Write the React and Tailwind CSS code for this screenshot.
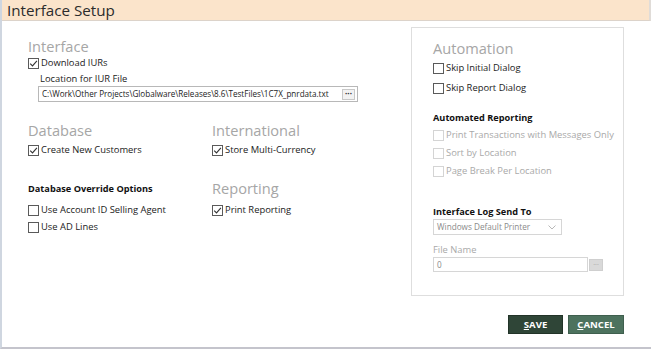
import React from "react";

const font = { fontFamily: '"Open Sans", "Noto Sans", sans-serif' };

function Box({ checked, disabled }) {
  return (
    <span
      className={
        "w-[11px] h-[11px] border flex items-center justify-center shrink-0 bg-white " +
        (disabled ? "border-[#d4d4d4]" : "border-[#5a5a5a]")
      }
    >
      {checked && (
        <svg width="9" height="9" viewBox="0 0 9 9">
          <path d="M1.2 4.6 L3.5 6.9 L7.9 1.8" fill="none" stroke="#333" strokeWidth="1.1" />
        </svg>
      )}
    </span>
  );
}

function Check({ label, checked, disabled, className = "" }) {
  return (
    <div className={"flex items-center gap-[2px] h-[14px] text-[9.4px] " + (disabled ? "text-[#a9a9a9] " : "text-[#222] ") + className}>
      <Box checked={checked} disabled={disabled} />
      <span className="leading-[14px] whitespace-nowrap">{label}</span>
    </div>
  );
}

function Heading({ children, className = "" }) {
  return <div className={"h-[20px] leading-[20px] text-[14.6px] text-[#a6a6a6] whitespace-nowrap " + className}>{children}</div>;
}

function Bold({ children, className = "" }) {
  return <div className={"h-[14px] leading-[14px] text-[9.2px] font-bold text-[#111] whitespace-nowrap " + className}>{children}</div>;
}

export default function App() {
  return (
    <div className="w-[651px] h-[349px] bg-white border-l-2 border-l-[#cfd6e0] border-b-2 border-b-[#c4c4cc] flex flex-col overflow-hidden" style={font}>
      <div className="h-[21px] shrink-0 bg-[#fbe4cb] border-b border-[#dcd3ca] border-r-2 border-r-[#e0dcd8] pl-[5px] flex items-center">
        <span className="text-[15.2px] leading-[19px] text-[#2b2b2b]">Interface Setup</span>
      </div>
      <div className="flex flex-1">
        <div className="w-[409px] pl-[26px]">
          <Heading className="mt-[15px]">Interface</Heading>
          <Check label="Download IURs" checked />
          <div className="mt-[2px] pl-[12px] h-[14px] leading-[14px] text-[9.4px] text-[#222]">Location for IUR File</div>
          <div className="ml-[10px] w-[320px] h-[16px] border border-[#b8b8b8] flex items-center pl-[3px] pr-[2px]">
            <span className="flex-1 text-[8.1px] leading-[14px] text-[#222] whitespace-nowrap overflow-hidden">
              C:\Work\Other Projects\Globalware\Releases\8.6\TestFiles\1C7X_pnrdata.txt
            </span>
            <span className="w-[13px] h-[11px] border border-[#c8c8c8] bg-[#f2f2f2] flex items-center justify-center text-[8px] leading-[8px] font-bold text-[#333]">···</span>
          </div>
          <div className="grid grid-cols-[184px_1fr]">
            <div>
              <Heading className="mt-[18px]">Database</Heading>
              <Check className="mt-[3px]" label="Create New Customers" checked />
              <Bold className="mt-[25px]">Database Override Options</Bold>
              <Check className="mt-[7px]" label="Use Account ID Selling Agent" />
              <Check className="mt-[3px]" label="Use AD Lines" />
            </div>
            <div>
              <Heading className="mt-[18px]">International</Heading>
              <Check className="mt-[3px]" label="Store Multi-Currency" checked />
              <Heading className="mt-[21px]">Reporting</Heading>
              <Check className="mt-[5px]" label="Print Reporting" checked />
            </div>
          </div>
        </div>
        <div className="w-[213px] flex flex-col items-end">
          <div className="mt-[6px] w-[213px] h-[269px] border border-[#dedede] pl-[21px] pt-[10px]">
            <Heading>Automation</Heading>
            <Check className="mt-[3px]" label="Skip Initial Dialog" />
            <Check className="mt-[6px]" label="Skip Report Dialog" />
            <Bold className="mt-[16px]">Automated Reporting</Bold>
            <Check className="mt-[3px]" label="Print Transactions with Messages Only" disabled />
            <Check className="mt-[4px]" label="Sort by Location" disabled />
            <Check className="mt-[4px]" label="Page Break Per Location" disabled />
            <Bold className="mt-[27px]">Interface Log Send To</Bold>
            <div className="w-[129px] h-[16px] border border-[#d6d6d6] flex items-center pl-[3px] pr-[5px]">
              <span className="flex-1 text-[8.2px] text-[#8a8a8a] whitespace-nowrap">Windows Default Printer</span>
              <svg width="8" height="5" viewBox="0 0 8 5">
                <path d="M0.5 0.5 L4 4 L7.5 0.5" fill="none" stroke="#b0b0b0" strokeWidth="0.9" />
              </svg>
            </div>
            <div className="mt-[8px] h-[14px] leading-[14px] text-[9.4px] text-[#a9a9a9]">File Name</div>
            <div className="flex items-center gap-[1px]">
              <div className="w-[155px] h-[15px] border border-[#d6d6d6] pl-[3px] text-[8.2px] leading-[13px] text-[#8a8a8a]">0</div>
              <div className="w-[14px] h-[12px] bg-[#d9d9d9] border border-[#cfcfcf] flex items-center justify-center text-[7px] leading-[7px] text-[#999]">···</div>
            </div>
          </div>
          <div className="mt-[19px] flex gap-[5px]">
            <button className="w-[55px] h-[19px] bg-[#2f4537] border border-[#223328] text-white text-[9.6px] font-bold leading-[17px]">
              <span className="underline">S</span>AVE
            </button>
            <button className="w-[56px] h-[19px] bg-[#4d725e] border border-[#3f5f4e] text-white text-[9.6px] font-bold leading-[17px]">
              <span className="underline">C</span>ANCEL
            </button>
          </div>
        </div>
      </div>
    </div>
  );
}
